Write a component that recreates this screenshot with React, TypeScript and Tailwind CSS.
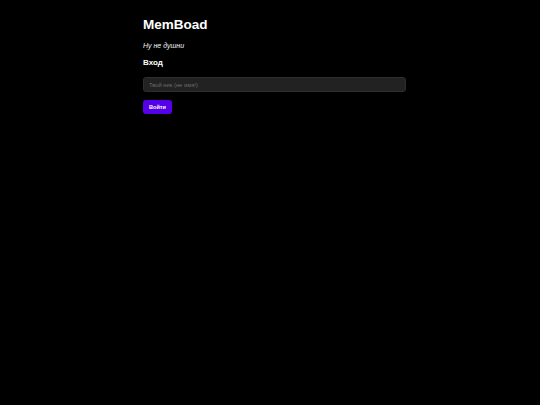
import React, { useState } from 'react';

const App: React.FC = () => {
  const [nick, setNick] = useState('');

  return (
    <div className="min-h-screen bg-black text-white font-['Liberation_Sans',Arial,sans-serif]">
      <div className="mx-auto w-[272px] pl-[9px] pt-[16px]">
        <h1 className="text-[13.5px] font-bold leading-[18px]">MemBoad</h1>
        <p className="mt-[7px] text-[7px] italic leading-[9px] text-gray-100">Ну не душни</p>
        <h2 className="mt-[7px] text-[8px] font-bold leading-[12px]">Вход</h2>
        <div className="mt-[8px]">
          <input
            value={nick}
            onChange={(e) => setNick(e.target.value)}
            placeholder="Твой ник (не имя!)"
            className="block h-[15px] w-full rounded-[3px] border border-[#2e2e2e] bg-[#222222] px-[5px] text-[5.8px] text-white outline-none placeholder:text-[#6b6b6b]"
          />
        </div>
        <button className="mt-[6px] h-[14px] w-[29px] rounded-[3px] bg-[#5500e8] text-[5.6px] font-semibold text-white">
          Войти
        </button>
      </div>
    </div>
  );
};

export default App;
